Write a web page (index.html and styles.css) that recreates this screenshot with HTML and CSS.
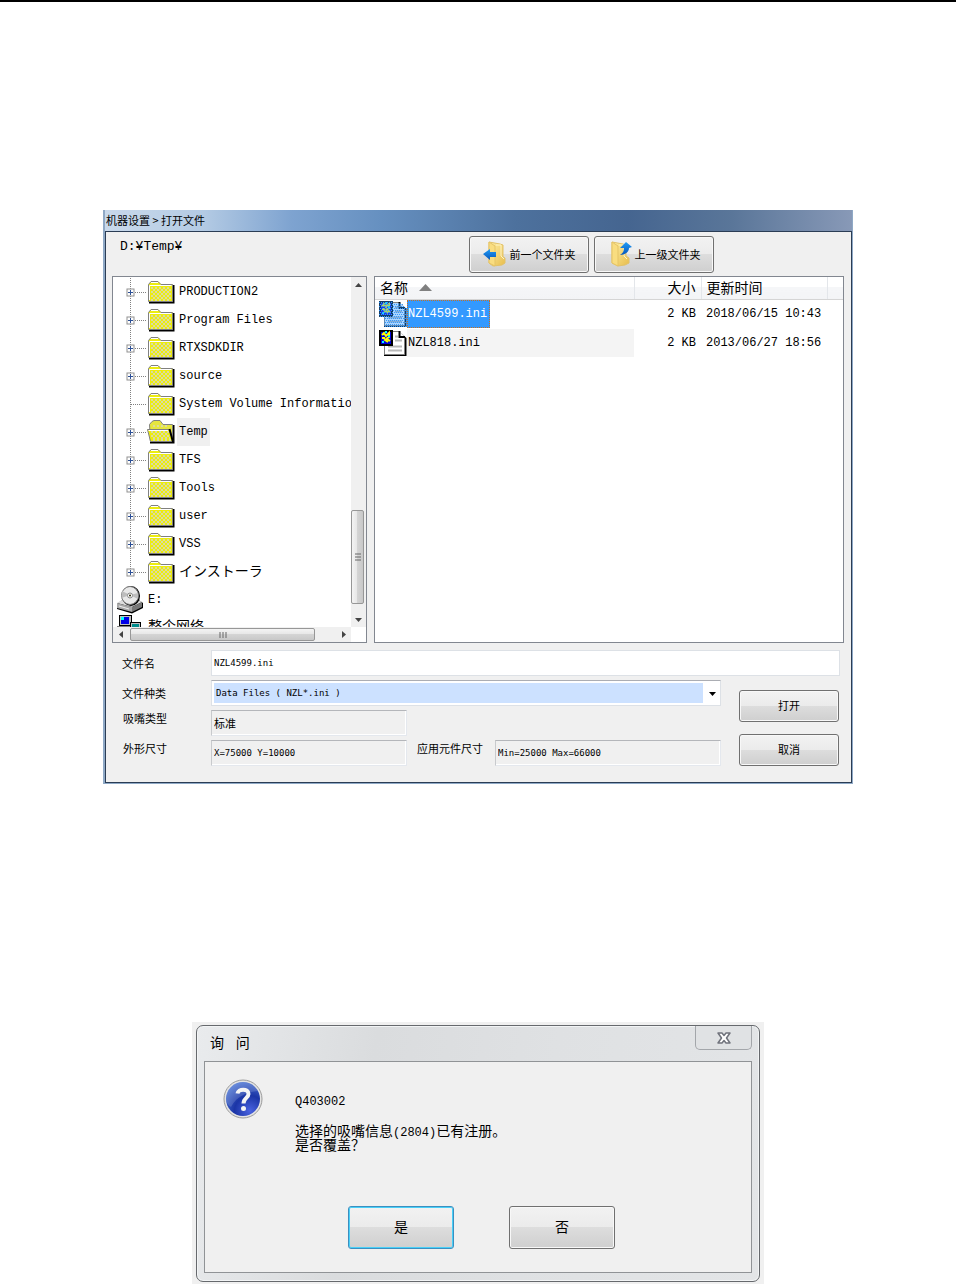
FILE: index.html
```html
<!DOCTYPE html>
<html lang="zh-CN">
<head>
    <meta charset="UTF-8">
    <meta name="viewport" content="width=device-width, initial-scale=1.0">
    <title>机器设置 &gt; 打开文件</title>
    <link rel="stylesheet" href="styles.css">
</head>
<body>
    <!-- 图标 -->
    <svg class="sprite" width="0" height="0" aria-hidden="true">
        <defs>
            <linearGradient id="gold" x1="0" y1="0" x2="1" y2="1">
                <stop offset="0" stop-color="#fff0a8"/>
                <stop offset="1" stop-color="#e8bd4c"/>
            </linearGradient>
            <linearGradient id="blue" x1="0" y1="0" x2="0" y2="1">
                <stop offset="0" stop-color="#1f9bf5"/>
                <stop offset="1" stop-color="#0757bd"/>
            </linearGradient>
            <radialGradient id="ball" cx="0.7" cy="0.85" r="0.9">
                <stop offset="0" stop-color="#4a63e0"/>
                <stop offset="0.5" stop-color="#1b35a6"/>
                <stop offset="1" stop-color="#4d76d4"/>
            </radialGradient>
        </defs>
        <symbol id="branch" viewBox="0 0 21 28">
            <path d="M4.500 0V28" stroke="#808080" stroke-dasharray="1 1"/>
            <path d="M9 14.500H21" stroke="#808080" stroke-dasharray="1 1"/>
            <rect x="1" y="11" width="7" height="7" fill="#fff" stroke="#919191"/>
            <path d="M2 14.500H7M4.500 12V17" stroke="#2b4f96"/>
        </symbol>
        <symbol id="branch-plain" viewBox="0 0 21 28">
            <path d="M4.500 0V28" stroke="#808080" stroke-dasharray="1 1"/>
            <path d="M5 14.500H21" stroke="#808080" stroke-dasharray="1 1"/>
        </symbol>
        <symbol id="branch-last" viewBox="0 0 21 28">
            <path d="M4.500 0V11" stroke="#808080" stroke-dasharray="1 1"/>
            <path d="M9 14.500H21" stroke="#808080" stroke-dasharray="1 1"/>
            <rect x="1" y="11" width="7" height="7" fill="#fff" stroke="#919191"/>
            <path d="M2 14.500H7M4.500 12V17" stroke="#2b4f96"/>
        </symbol>
        <symbol id="folder" viewBox="0 0 28 24">
            <path d="M2 22.500H26.500V5" fill="none" stroke="#000" stroke-width="2"/>
            <path d="M1.500 21.500V4.500L4 1.500H11L14 4.500H25.500V21.500Z" fill="#ecec10" stroke="#808080"/>
            <path d="M4 8H24M4 12H24M4 16H24M4 20H24" stroke="#dcdca0" stroke-width="2" stroke-dasharray="2 2"/>
            <path d="M6 10H24M6 14H24M6 18H24" stroke="#dcdca0" stroke-width="2" stroke-dasharray="2 2"/>
            <path d="M2.500 20V5.500H24.500M4 2.500H11" fill="none" stroke="#fff"/>
        </symbol>
        <symbol id="folder-open" viewBox="0 0 28 24">
            <path d="M3 22.500H26.500V5" fill="none" stroke="#000" stroke-width="2"/>
            <path d="M3.500 21.500L2.500 4.500L5 1.500L7 .500H13L16 4.500H25.500V21.500Z" fill="#e6e640" stroke="#808080"/>
            <path d="M3.500 21.500L.500 9.500H22.500L26 21.500Z" fill="#ecec10" stroke="#808080"/>
            <path d="M4 12H22M4 16H23M6 20H24" stroke="#dcdca0" stroke-width="2" stroke-dasharray="2 2"/>
            <path d="M6 14H22M6 18H23M6 6H22" stroke="#dcdca0" stroke-width="2" stroke-dasharray="2 2"/>
            <path d="M1.500 10.500H21" stroke="#fff"/>
            <path d="M22.500 9L26 22" stroke="#000" stroke-width="2"/>
        </symbol>
        <symbol id="drive" viewBox="0 0 28 28">
            <path d="M1 18L9 12H20L27 17V22L16 27.500L1 23Z" fill="#000"/>
            <path d="M1 17L9 12H19L26 16L16 21Z" fill="#dcdcdc"/>
            <path d="M1 17L16 21V26L1 22Z" fill="#a8a8a8"/>
            <path d="M16 21L26 16V21L16 26Z" fill="#777"/>
            <path d="M3 20L13 23" stroke="#eee"/>
            <ellipse cx="15" cy="10" rx="9" ry="10" fill="#000"/>
            <ellipse cx="14" cy="9.500" rx="8.500" ry="9" fill="#e8e8e8" stroke="#777"/>
            <path d="M14 9L6 5L5.500 12ZM14 9L22 7L22 13Z" fill="#bdbdbd"/>
            <circle cx="14" cy="9.500" r="2.500" fill="#fff" stroke="#888"/>
            <circle cx="14" cy="9.500" r="1" fill="#222200"/>
        </symbol>
        <symbol id="network" viewBox="0 0 28 28">
            <rect x="3.500" y="2.500" width="12" height="10" fill="#c0c0c0" stroke="#000"/>
            <rect x="5" y="4" width="8" height="7" fill="#0000e8"/>
            <rect x="5" y="4" width="3" height="3" fill="#00ffff"/>
            <path d="M1 13.500H14" stroke="#808080"/>
            <rect x="14.500" y="9.500" width="10" height="8" fill="#c0c0c0" stroke="#000"/>
            <rect x="16" y="11" width="7" height="5" fill="#008c8c"/>
        </symbol>
        <symbol id="ini" viewBox="0 0 28 28">
            <path d="M5 27V3H21L27.500 9V27Z" fill="#000"/>
            <path d="M5.500 25.500V2.500H20L25.500 8V25.500Z" fill="#fff" stroke="#808080"/>
            <path d="M20.500 2V8H26" fill="#fff" stroke="#000" stroke-width="2"/>
            <path d="M16 7.500H19M16 11.500H23M9 17.500H23M9 21.500H23" stroke="#b8b8b8" stroke-width="2"/>
            <rect width="14" height="16" y="1" fill="#000"/>
            <rect x="2" y="3" width="10" height="12" fill="#0000e0"/>
            <path d="M3 6L5 4L7 7L10 4V8L6 11L9 13M3 9H6M8 10L11 12" fill="none" stroke="#ffff00" stroke-width="2"/>
            <path d="M3 13H5M10 6V8M6 3H8" stroke="#00ffff" stroke-width="2"/>
        </symbol>
        <symbol id="ini-selected" viewBox="0 0 28 28">
            <use href="#ini" width="28" height="28"/>
            <path d="M0 1H14V3H21L28 9V27H5V17H0Z" fill="#3399ff" opacity="0.400"/>
            <path d="M0 2.500h14m-13 2h23m-24 2h26m-25 2h27m-28 2h28m-27 2h27m-28 2h28m-27 2h27m-22 2h22m-21 2h21m-22 2h22m-21 2h21m-22 2h22" fill="none" stroke="#3399ff" stroke-dasharray="1 1"/>
        </symbol>
    </svg>

    <main class="page">
        <section class="file-window">
            <h1 class="title-bar">机器设置 &gt; 打开文件</h1>
            <div class="client">
                <div class="toolbar">
                    <span class="path">D:¥Temp¥</span>
                    <button type="button" class="btn tool-btn">
                        <svg width="24" height="26" viewBox="0 0 24 26" aria-hidden="true">
                            <path d="M6 1L17 3L20 4V16L22 17V22L19 24L10 25L6 22Z" fill="url(#gold)" stroke="#e2c26a"/>
                            <path d="M6 1L12 5V25L6 22Z" fill="#f9dd80" stroke="#e5c467"/>
                            <path d="M13 4L18 4V15L21 18" fill="none" stroke="#fff4c4"/>
                            <path d="M0 13L7 8V11H13V16H7V19Z" fill="url(#blue)"/>
                        </svg>
                        前一个文件夹
                    </button>
                    <button type="button" class="btn tool-btn">
                        <svg width="24" height="26" viewBox="0 0 24 26" aria-hidden="true">
                            <path d="M4 1L15 3L18 4V15L21 17V22L17 24L10 25L4 22Z" fill="url(#gold)" stroke="#e2c26a"/>
                            <path d="M4 1L10 5V25L4 22Z" fill="#f9dd80" stroke="#e5c467"/>
                            <path d="M11 4L16 4V15L19 18" fill="none" stroke="#fff4c4"/>
                            <path d="M18 1L24 6L21 7C21 11 17 14 12 14C15 12 16 10 16 7H12Z" fill="url(#blue)"/>
                        </svg>
                        上一级文件夹
                    </button>
                </div>

                <div class="panes">
                    <div class="tree-pane">
                        <ul class="tree">
                            <li class="node"><svg class="branch"><use href="#branch"/></svg><svg class="folder"><use href="#folder"/></svg><span>PRODUCTION2</span></li>
                            <li class="node"><svg class="branch"><use href="#branch"/></svg><svg class="folder"><use href="#folder"/></svg><span>Program Files</span></li>
                            <li class="node"><svg class="branch"><use href="#branch"/></svg><svg class="folder"><use href="#folder"/></svg><span>RTXSDKDIR</span></li>
                            <li class="node"><svg class="branch"><use href="#branch"/></svg><svg class="folder"><use href="#folder"/></svg><span>source</span></li>
                            <li class="node"><svg class="branch"><use href="#branch-plain"/></svg><svg class="folder"><use href="#folder"/></svg><span>System Volume Information</span></li>
                            <li class="node current"><svg class="branch"><use href="#branch"/></svg><svg class="folder"><use href="#folder-open"/></svg><span>Temp</span></li>
                            <li class="node"><svg class="branch"><use href="#branch"/></svg><svg class="folder"><use href="#folder"/></svg><span>TFS</span></li>
                            <li class="node"><svg class="branch"><use href="#branch"/></svg><svg class="folder"><use href="#folder"/></svg><span>Tools</span></li>
                            <li class="node"><svg class="branch"><use href="#branch"/></svg><svg class="folder"><use href="#folder"/></svg><span>user</span></li>
                            <li class="node"><svg class="branch"><use href="#branch"/></svg><svg class="folder"><use href="#folder"/></svg><span>VSS</span></li>
                            <li class="node"><svg class="branch"><use href="#branch-last"/></svg><svg class="folder"><use href="#folder"/></svg><span class="cjk">インストーラ</span></li>
                            <li class="node root"><svg class="device"><use href="#drive"/></svg><span>E:</span></li>
                            <li class="node root"><svg class="device"><use href="#network"/></svg><span class="cjk">整个网络</span></li>
                        </ul>
                        <div class="scroll-y">
                            <button type="button" class="arrow" aria-label="向上"><svg width="7" height="4"><path d="M0 4L3.500 0L7 4Z" fill="#444"/></svg></button>
                            <div class="track"><div class="thumb"><svg width="6" height="8"><path d="M0 1H6M0 4H6M0 7H6" stroke="#666"/></svg></div></div>
                            <button type="button" class="arrow" aria-label="向下"><svg width="7" height="4"><path d="M0 0L3.500 4L7 0Z" fill="#444"/></svg></button>
                        </div>
                        <div class="scroll-x">
                            <button type="button" class="arrow" aria-label="向左"><svg width="4" height="7"><path d="M4 0L0 3.500L4 7Z" fill="#444"/></svg></button>
                            <div class="track"><div class="thumb"><svg width="8" height="6"><path d="M1 0V6M4 0V6M7 0V6" stroke="#666"/></svg></div></div>
                            <button type="button" class="arrow" aria-label="向右"><svg width="4" height="7"><path d="M0 0L4 3.500L0 7Z" fill="#444"/></svg></button>
                        </div>
                    </div>

                    <div class="list-pane">
                        <table class="list">
                            <thead>
                                <tr>
                                    <th class="col-name">名称<svg class="sort" width="13" height="7"><path d="M0 7L6.500 0L13 7Z" fill="#808080"/></svg></th>
                                    <th class="col-size">大小</th>
                                    <th class="col-time">更新时间</th>
                                    <th class="col-end"></th>
                                </tr>
                            </thead>
                            <tbody>
                                <tr class="selected">
                                    <td>
                                        <div class="file">
                                            <svg width="28" height="28"><use href="#ini-selected"/></svg>
                                            <span class="file-name">NZL4599.ini</span>
                                        </div>
                                    </td>
                                    <td class="size">2 KB</td>
                                    <td class="time">2018/06/15 10:43</td>
                                    <td></td>
                                </tr>
                                <tr class="striped">
                                    <td>
                                        <div class="file">
                                            <svg width="28" height="28"><use href="#ini"/></svg>
                                            <span class="file-name">NZL818.ini</span>
                                        </div>
                                    </td>
                                    <td class="size">2 KB</td>
                                    <td class="time">2013/06/27 18:56</td>
                                    <td></td>
                                </tr>
                            </tbody>
                        </table>
                    </div>
                </div>

                <form class="form">
                    <label for="fileName">文件名</label>
                    <input class="field wide" id="fileName" type="text" value="NZL4599.ini">
                    <label for="fileType">文件种类</label>
                    <div class="select-box">
                        <select id="fileType">
                            <option>Data Files ( NZL*.ini )</option>
                        </select>
                        <svg class="caret" width="7" height="4"><path d="M0 0H7L3.500 4Z" fill="#000"/></svg>
                    </div>
                    <label class="upper" for="nozzleType">吸嘴类型</label>
                    <input class="field readonly cjk-field" id="nozzleType" type="text" value="标准" readonly>
                    <label class="upper row-last" for="outerSize">外形尺寸</label>
                    <input class="field readonly row-last" id="outerSize" type="text" value="X=75000 Y=10000" readonly>
                    <label class="upper inner row-last" for="partSize">应用元件尺寸</label>
                    <input class="field readonly row-last" id="partSize" type="text" value="Min=25000 Max=66000" readonly>
                    <div class="actions">
                        <button type="button" class="btn">打开</button>
                        <button type="button" class="btn">取消</button>
                    </div>
                </form>
            </div>
        </section>

        <section class="dialog-back">
            <div class="dialog">
                <div class="dialog-title">
                    <h2>询&nbsp;&nbsp;&nbsp;问</h2>
                    <button type="button" class="close" aria-label="关闭">
                        <svg width="14" height="12" viewBox="0 0 14 12"><path d="M1 1H5L7 3.500L9 1H13L9.500 6L13 11H9L7 8.500L5 11H1L4.500 6Z" fill="#fff" stroke="#70737c" stroke-width="1.500" stroke-linejoin="round"/></svg>
                    </button>
                </div>
                <div class="dialog-body">
                    <div class="message">
                        <svg width="40" height="40" viewBox="0 0 40 40" aria-hidden="true">
                            <circle cx="20" cy="20" r="19" fill="#e4e4e4" stroke="#9c9c9c"/>
                            <circle cx="20" cy="20" r="17" fill="url(#ball)"/>
                            <path d="M3 20A17 17 0 0 1 35 12C26 13 14 16 8 28Q4 26 3 20Z" fill="#fff" opacity="0.150"/>
                            <path d="M14.500 14.500C15 9.500 25.500 9 25.500 15C25.500 19 20.500 19 20.500 24.500" fill="none" stroke="#f4f4f4" stroke-width="4"/>
                            <circle cx="20.500" cy="29.500" r="2.500" fill="#f4f4f4"/>
                        </svg>
                        <div class="message-text">
                            <p class="code">Q403002</p>
                            <p>选择的吸嘴信息<span class="code">(2804)</span>已有注册。<br>是否覆盖？</p>
                        </div>
                    </div>
                    <div class="dialog-actions">
                        <button type="button" class="btn default">是</button>
                        <button type="button" class="btn">否</button>
                    </div>
                </div>
            </div>
        </section>
    </main>
</body>
</html>
```

FILE: styles.css
```css
:root {
    --face: #f0f0f0;
    --line: #828790;
    --cjk: "Noto Sans CJK SC", sans-serif;
    --mono: "Liberation Mono", "Noto Sans CJK SC", monospace;
    --small-mono: "DejaVu Sans Mono", "Noto Sans CJK SC", monospace;
}

* {
    box-sizing: border-box;
}

body {
    margin: 0;
    background: #fff;
    color: #000;
    font-family: var(--cjk);
    font-size: 11px;
}

h1,
h2,
p {
    margin: 0;
    font-weight: normal;
}

svg {
    display: block;
    flex: none;
}

.sprite {
    position: absolute;
}

button,
input,
select {
    font-family: inherit;
    font-size: inherit;
    color: inherit;
}

.page {
    border-top: 2px solid #000;
    padding-top: 208px;
}

.btn {
    display: flex;
    align-items: center;
    justify-content: center;
    padding: 0 0 2px;
    border: 1px solid #707070;
    border-radius: 3px;
    background: linear-gradient(#f2f2f2, #ebebeb 50%, #dddddd 50%, #cfcfcf);
    box-shadow: inset 0 0 0 1px #f8f8f8;
}

/* 打开文件窗口 */
.file-window {
    margin: 0 103px;
    border: solid #8fa9c6;
    border-width: 0 1px 1px 2px;
    background: #8fa9c6;
}

.title-bar {
    height: 21px;
    padding-left: 1px;
    line-height: 21px;
    font-size: 11px;
    background: linear-gradient(to right, #c9d9eb, #b4cbe4 13%, #7ea3d0 25%, #6690c0 37%, #4d719d 55%, #456590 70%, #5a7699 84%, #8899b7);
}

.client {
    border: 1px solid #2b3d55;
    background: var(--face);
}

.toolbar {
    display: flex;
    gap: 5px;
    padding: 4px 137px 3px 14px;
}

.path {
    flex: 1;
    font-family: var(--mono);
    font-size: 13px;
    line-height: 22px;
}

.tool-btn {
    width: 120px;
    height: 37px;
    gap: 3px;
}

.panes {
    display: grid;
    grid-template-columns: 255fr 470fr;
    gap: 7px;
    padding: 0 7px 0 6px;
}

.tree-pane,
.list-pane {
    border: 1px solid var(--line);
    background: #fff;
    min-width: 0;
}

.tree-pane {
    display: grid;
    grid-template-columns: minmax(0, 1fr) 15px;
    grid-template-rows: 350px 15px;
}

.tree {
    margin: 0;
    padding: 1px 0 0 13px;
    list-style: none;
    overflow: hidden;
}

.node {
    display: flex;
    align-items: center;
    height: 28px;
    font-family: var(--mono);
    font-size: 12px;
    white-space: nowrap;
}

.node span {
    padding: 0 2px;
    line-height: 28px;
}

.node .cjk {
    font-size: 14px;
}

.current span {
    background: #f0f0f0;
}

.branch {
    width: 21px;
    height: 28px;
}

.folder {
    width: 28px;
    height: 24px;
    margin-right: 2px;
}

.root {
    height: 27px;
    margin-left: -10px;
}

.device {
    width: 28px;
    height: 28px;
    margin-right: 2px;
}

.scroll-y,
.scroll-x {
    display: flex;
    background: #f0f0f0;
}

.scroll-y {
    flex-direction: column;
}

.arrow {
    display: flex;
    align-items: center;
    justify-content: center;
    width: 15px;
    height: 15px;
    padding: 0;
    border: 0;
    background: none;
}

.track {
    display: flex;
    flex: 1;
}

.thumb {
    display: flex;
    align-items: center;
    justify-content: center;
    border: 1px solid #979797;
    border-radius: 2px;
}

.scroll-y .track {
    align-items: flex-end;
    padding-bottom: 8px;
}

.scroll-y .thumb {
    width: 13px;
    height: 94px;
    background: linear-gradient(to right, #f4f4f4, #e6e6e6 50%, #d4d4d4 50%, #c8c8c8);
}

.scroll-x .track {
    align-items: center;
    padding-left: 2px;
}

.scroll-x .thumb {
    width: 90%;
    height: 13px;
    background: linear-gradient(#f4f4f4, #e6e6e6 50%, #d4d4d4 50%, #c8c8c8);
}

.list {
    width: 100%;
    table-layout: fixed;
    border-collapse: collapse;
}

.list th {
    height: 22px;
    padding: 0;
    border-bottom: 1px solid #d5d5d5;
    border-right: 1px solid #e3e6ea;
    background: linear-gradient(#fff 45%, #f5f6f8 45%, #f3f4f6);
    font-size: 14px;
    line-height: 21px;
    font-weight: normal;
    text-align: left;
}

.list .col-name {
    padding-left: 5px;
}

.sort {
    display: inline-block;
    margin-left: 11px;
    vertical-align: 2px;
}

.list .col-size {
    width: 67px;
    padding-right: 5px;
    text-align: right;
}

.list .col-time {
    width: 126px;
    padding-left: 5px;
}

.list .col-end {
    width: 16px;
    border-right: 0;
}

.list td {
    height: 29px;
    padding: 0;
    font-family: var(--mono);
    font-size: 12px;
    white-space: nowrap;
}

.list .size {
    padding-right: 5px;
    text-align: right;
}

.list .time {
    padding-left: 5px;
}

.file {
    display: flex;
    align-items: center;
    padding-left: 4px;
}

.file-name {
    padding: 0 3px 0 1px;
    line-height: 28px;
}

.selected .file-name {
    background: #3399ff;
    color: #fff;
    outline: 1px dotted #c87020;
    outline-offset: -1px;
}

.striped .file-name {
    flex: 1;
    background: #f4f4f4;
}

.form {
    display: grid;
    grid-template-columns: 89px minmax(0, 196fr) 88px minmax(0, 226fr) 119px;
    grid-auto-rows: 26px;
    row-gap: 4px;
    padding: 7px 11px 16px 16px;
}

.form label {
    grid-column: 1;
    align-self: center;
    line-height: 16px;
    white-space: nowrap;
}

.form .upper {
    align-self: start;
    padding-left: 1px;
}

.form .inner {
    grid-column: 3;
    padding-left: 10px;
}

.field {
    min-width: 0;
    width: 100%;
    padding: 0 2px;
    border: 1px solid #dde1e6;
    background: #fff;
    font-family: var(--small-mono);
    font-size: 9px;
}

.wide {
    grid-column: 2 / -1;
}

.readonly {
    border-color: #b4b6ba #e4e8ee #e4e8ee #c8cacd;
    background: var(--face);
    box-shadow: inset -1px -1px 0 #fff;
}

.cjk-field {
    font-size: 11px;
}

.row-last {
    grid-row: 4;
}

.select-box {
    grid-column: 2 / 5;
    position: relative;
}

.select-box select {
    appearance: none;
    width: 100%;
    height: 100%;
    padding: 0 18px 0 4px;
    border: 1px solid #dde1e6;
    border-top-color: #abadb3;
    border-radius: 0;
    background: linear-gradient(to right, #fff 2px, #cce1ff 2px, #cce1ff calc(100% - 17px), #fff calc(100% - 17px));
    box-shadow: inset 0 0 0 2px #fff;
    font-family: var(--small-mono);
    font-size: 9px;
}

.caret {
    position: absolute;
    right: 5px;
    top: 12px;
    pointer-events: none;
}

.actions {
    grid-column: 5;
    grid-row: 2 / 5;
    display: flex;
    flex-direction: column;
    justify-content: flex-end;
    gap: 12px;
    padding: 0 1px 0 18px;
}

.actions .btn {
    height: 32px;
}

/* 询问对话框 */
.dialog-back {
    margin: 238px 192px 0;
    padding: 3px 4px 4px;
    background: var(--face);
}

.dialog {
    padding: 0 7px 8px;
    border: 1px solid #66696d;
    border-radius: 7px;
    background: linear-gradient(100deg, #e9ebed, #dadcde 30%, #dfe1e3 60%, #e3e5e7);
    box-shadow: inset 0 0 0 1px #f2f4f5;
}

.dialog-title {
    display: flex;
    justify-content: space-between;
    align-items: flex-start;
    height: 35px;
    padding-left: 6px;
}

.dialog-title h2 {
    font-family: "Liberation Sans", "Noto Sans CJK SC", sans-serif;
    font-size: 14px;
    line-height: 34px;
}

.close {
    display: flex;
    align-items: center;
    justify-content: center;
    width: 57px;
    height: 24px;
    padding: 0;
    border: 1px solid #a3a6aa;
    border-top: 0;
    border-radius: 0 0 5px 5px;
    background: #e0e2e4;
}

.dialog-body {
    padding: 17px 18px 23px;
    border: 1px solid #909396;
    background: var(--face);
}

.message {
    display: flex;
    gap: 32px;
    min-height: 127px;
}

.message-text {
    padding-top: 16px;
    font-size: 14px;
    line-height: 14px;
}

.message-text .code {
    font-family: var(--mono);
    font-size: 12px;
}

.message-text p + p {
    margin-top: 14px;
}

.message-text span {
    line-height: 0;
}

.dialog-actions {
    display: flex;
    justify-content: center;
    gap: 55px;
    padding-left: 7px;
}

.dialog-actions .btn {
    width: 106px;
    height: 43px;
    padding-bottom: 4px;
    font-size: 14px;
}

.dialog-actions .default {
    border-color: #3c8fc0;
    box-shadow: inset 0 0 0 1px #48d0f8;
}
```
